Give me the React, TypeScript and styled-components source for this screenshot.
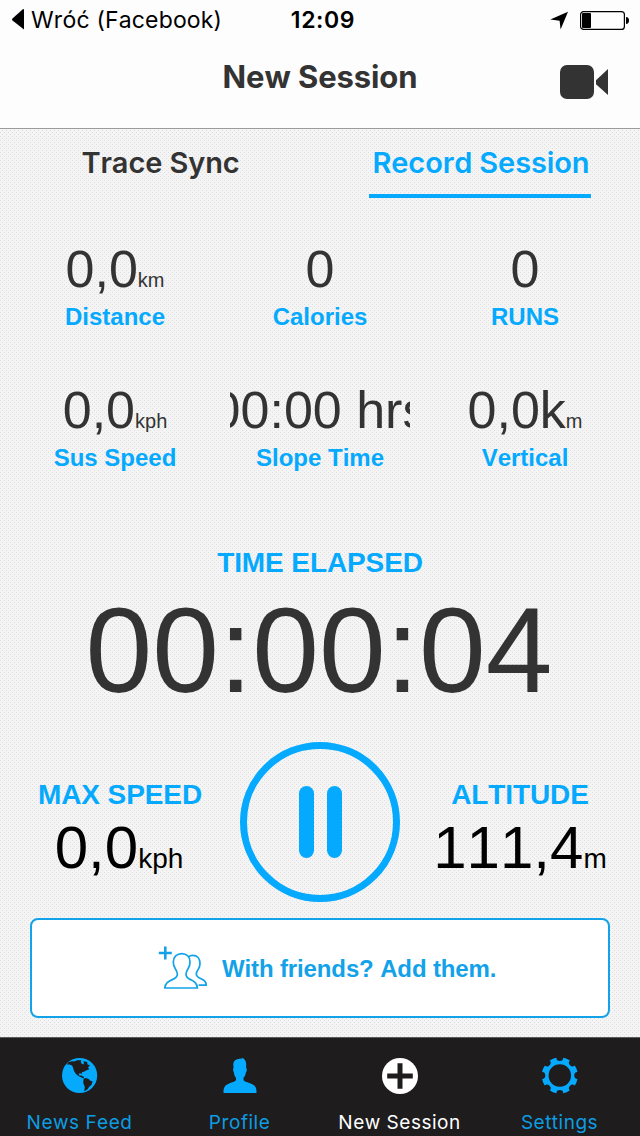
import React from "react";
import styled, { createGlobalStyle } from "styled-components";

const BLUE = "#05a9fd";
const INK = "#333333";
const SYSTEM = `Inter, "Liberation Sans", sans-serif`;
const HELV = `"Liberation Sans", Arial, sans-serif`;

const GlobalStyle = createGlobalStyle`
  * { box-sizing: border-box; }
  html, body { margin: 0; padding: 0; }
  body { width: 640px; height: 1136px; overflow: hidden; font-kerning: none; }
`;

const Screen = styled.div`
  width: 640px;
  height: 1136px;
  display: flex;
  flex-direction: column;
  overflow: hidden;
  font-family: ${HELV};
  color: ${INK};
  background-color: #f4f4f4;
  background-image: conic-gradient(at 1px 1px, transparent 75%, #dfdfdf 0),
    conic-gradient(at 1px 1px, transparent 75%, #dfdfdf 0);
  background-size: 4px 4px;
  background-position: 0 0, 2px 2px;
`;

const Header = styled.header`
  height: 129px;
  flex: none;
  background: #fdfdfd;
  border-bottom: 1px solid #9b9b9b;
  font-family: ${SYSTEM};
`;

const StatusBar = styled.div`
  height: 40px;
  display: grid;
  grid-template-columns: 1fr 80px 1fr;
  align-items: start;
  color: #000;
  padding: 0 11px 0 12px;
  font-size: 23px;
  line-height: 40px;
`;

const BackLink = styled.div`
  display: flex;
  gap: 6px;
  letter-spacing: 0.15px;
  white-space: nowrap;
  svg { margin-top: 8px; }
`;

const Clock = styled.div`
  padding-left: 5px;
  text-align: center;
  font-weight: 600;
  letter-spacing: 0.6px;
  line-height: 41px;
`;

const StatusIcons = styled.div`
  display: flex;
  justify-content: flex-end;
  gap: 12px;
  padding-top: 11px;
`;

const NavBar = styled.div`
  height: 88px;
  display: grid;
  grid-template-columns: 1fr 240px 1fr;
  padding: 0 31px;
`;

const Title = styled.h1`
  grid-column: 2;
  margin: 0;
  font-size: 31px;
  font-weight: 650;
  letter-spacing: -0.1px;
  line-height: 74px;
  text-align: center;
  white-space: nowrap;
`;

const CameraButton = styled.div`
  justify-self: end;
  padding-top: 25px;
`;

const Tabs = styled.nav`
  height: 69px;
  flex: none;
  display: flex;
  justify-content: space-between;
  padding: 0 49px 0 50px;
`;

const Tab = styled.div<{ $active?: boolean }>`
  width: ${(p) => (p.$active ? 222 : 221)}px;
  height: 69px;
  padding-left: ${(p) => (p.$active ? 2 : 0)}px;
  font-family: ${SYSTEM};
  font-size: 29px;
  font-weight: 600;
  letter-spacing: -0.1px;
  line-height: 67px;
  text-align: center;
  white-space: nowrap;
  color: ${(p) => (p.$active ? BLUE : INK)};
  border-bottom: 4px solid ${(p) => (p.$active ? BLUE : "transparent")};
`;

const Stats = styled.section`
  flex: none;
  display: grid;
  grid-template-columns: repeat(3, 180px);
  gap: 49px 25px;
  padding: 41px 25px 0;
`;

const StatValue = styled.div`
  display: flex;
  justify-content: center;
  align-items: baseline;
  overflow: hidden;
  height: 60px;
  font-size: 52px;
  line-height: 60px;
  white-space: pre;
`;

const Unit = styled.span<{ $size: number }>`
  font-size: ${(p) => p.$size}px;
`;

const StatLabel = styled.div`
  margin-top: 4px;
  font-size: 24px;
  font-weight: 700;
  line-height: 28px;
  text-align: center;
  color: ${BLUE};
`;

const Heading = styled.div`
  font-size: 28px;
  font-weight: 700;
  line-height: 34px;
  letter-spacing: -0.1px;
  text-align: center;
  color: ${BLUE};
`;

const Elapsed = styled.section`
  flex: none;
  padding-top: 74px;
`;

const Timer = styled.div`
  margin-top: 10px;
  padding-right: 2px;
  font-size: 120px;
  line-height: 120px;
  text-align: center;
`;

const Controls = styled.section`
  flex: none;
  display: grid;
  grid-template-columns: 240px 160px 240px;
  height: 160px;
  margin-top: 32px;
`;

const Reading = styled.div`
  padding-top: 36px;
`;

const ReadingValue = styled.div<{ $shift?: number }>`
  display: flex;
  justify-content: center;
  align-items: baseline;
  margin-top: 6px;
  padding-right: ${(p) => p.$shift ?? 0}px;
  font-size: 60px;
  line-height: 60px;
  color: #000;
`;

const PauseButton = styled.div`
  width: 160px;
  height: 160px;
  border: 7px solid ${BLUE};
  border-radius: 50%;
  display: flex;
  align-items: center;
  justify-content: center;
  gap: 13px;
`;

const PauseBar = styled.i`
  width: 15px;
  height: 72px;
  border-radius: 8px;
  background: ${BLUE};
`;

const FriendsButton = styled.div`
  flex: none;
  height: 100px;
  margin: 16px 30px 0;
  padding: 0 0 0 126px;
  display: flex;
  gap: 14px;
  background: #fff;
  border: 2px solid #13a2e8;
  border-radius: 8px;
  font-size: 24px;
  font-weight: 700;
  line-height: 98px;
  letter-spacing: -0.13px;
  color: #13a2e8;
  white-space: nowrap;
  svg { margin-top: 25px; }
`;

const TabBar = styled.nav`
  height: 99px;
  flex: none;
  margin-top: auto;
  display: grid;
  grid-template-columns: repeat(4, 160px);
  background: #1e1c1d;
  border-top: 1px solid #5c5c5c;
`;

const TabItem = styled.div<{ $active?: boolean }>`
  display: flex;
  flex-direction: column;
  align-items: center;
  padding: 19px 0 0;
  color: ${(p) => (p.$active ? "#fff" : BLUE)};
`;

const TabLabel = styled.span<{ $active?: boolean }>`
  margin: 15px 1px 0 0;
  font-family: ${SYSTEM};
  font-size: 19px;
  line-height: 28px;
  letter-spacing: 0.5px;
  white-space: nowrap;
  color: ${(p) => (p.$active ? "#fff" : "#0d9de2")};
`;

const Globe = () => (
  <svg width="36" height="37" viewBox="0 0 36 37">
    <circle cx="17.6" cy="18.5" r="17.6" fill="currentColor" />
    <path
      fill="#1e1c1d"
      d="M4.7 7.6 6.7 5 10 4.2 12 4.6 15.3 3.2 19.3 3.2 18.8 4.6 19.4 6.6 21.4 7.6 22 6 21.3 4.2 25.3 5 25.3 7.3 28 8.5 26 10.3 27.3 12.3 24 13.6 22.4 14.6 20 15.3 19.4 17.4 18.6 16.2 16.6 16.8 17.4 18.6 19.4 18.6 22 20 21.8 21.6 18.4 20 15.6 18.6 13.6 16.4 12 14 11 10.6 10 8.4 7.6 7.4Z"
    />
    <path fill="#1e1c1d" d="M21.6 21.8 24 20.9 27 22.2 28 23.4 30.6 24.5 29.4 28 27.2 29.8 25.4 32.6 22.2 34.2 22.8 29.8 21.2 26Z" />
  </svg>
);

const Person = () => (
  <svg width="36" height="37" viewBox="0 0 36 37">
    <path
      fill="currentColor"
      d="M12 4.5C13.5 2.2 17 2.1 19.7 1.6L21 1C22.7 2.5 24.2 4 24.2 7L24.1 11C25.1 11.3 25.1 14 23.9 15.5C23.6 17.8 22.8 19.5 21.5 20.8V23.3C23.5 25.5 30 25.9 33 29.2C34.6 31.2 34.6 34 34.4 36H1.6C1.4 34 1.4 31.2 3 29.2C6 25.9 12 25.5 14 23.3V20.8C12.6 19.5 12.2 17.8 11.9 15.5C10.8 14 10.8 11.3 11.6 11C11.2 8.5 11.1 6 12 4.5Z"
    />
  </svg>
);

const Plus = () => (
  <svg width="36" height="37" viewBox="0 0 36 37">
    <circle cx="18" cy="19" r="18" fill="currentColor" />
    <path d="M18 6.2v25.6M5.2 19h25.6" stroke="#1e1c1d" strokeWidth="5" fill="none" />
  </svg>
);

const Gear = () => (
  <svg width="36" height="37" viewBox="0 0 36 37">
    <mask id="gear">
      <circle cx="17.8" cy="18.5" r="18" fill="#fff" />
      <circle cx="17.8" cy="18.5" r="11.2" fill="#000" />
      {[0, 45, 90, 135, 180, 225, 270, 315].map((a) => (
        <ellipse key={a} cx="17.8" cy="0.8" rx="3.4" ry="3.2" fill="#000" transform={`rotate(${a} 17.8 18.5)`} />
      ))}
    </mask>
    <rect width="36" height="37" fill="currentColor" mask="url(#gear)" />
  </svg>
);

const AddFriends = () => (
  <svg width="50" height="46" viewBox="0 0 50 46" fill="none" stroke="#13a2e8" strokeWidth="1.7" strokeLinejoin="round">
    <path d="M7.3 1.5v13M0.8 8h13" strokeWidth="2.6" />
    <path d="M23.8 8.6C18.8 8.6 15.3 12 15.3 17C15.3 19.8 16 21.7 17.2 23.5C18.6 25.6 19.4 27 19.4 29.2C19.4 32 17.3 33.3 14.3 34.6C10.3 36.4 7.2 38 6.8 43H39.4C39 38 36.2 36.4 32.6 34.6C29.7 33.3 28 32 28 29.2C28 27 28.8 25.6 30.2 23.5C31.4 21.7 32 19.8 32 17C32 12 28.8 8.6 23.8 8.6Z" />
    <path d="M30.8 11.6C32 10.5 33.3 10.3 34.7 10.3C39.3 10.3 42 13.5 42 18.3C42 21 41.4 22.7 40.3 24.2C39 26 38.3 27.2 38.3 29C38.3 31.4 40.2 32.4 42.6 33.6C45.8 35.2 48.2 36.2 48.2 40.2H40.6" />
  </svg>
);

const stats = [
  { label: "Distance", value: "0,0", unit: "km" },
  { label: "Calories", value: "0" },
  { label: "RUNS", value: "0" },
  { label: "Sus Speed", value: "0,0", unit: "kph" },
  { label: "Slope Time", value: "00:00 hrs" },
  { label: "Vertical", value: "0,0k", unit: "m" },
];

const tabItems = [
  { label: "News Feed", Icon: Globe },
  { label: "Profile", Icon: Person },
  { label: "New Session", Icon: Plus, active: true },
  { label: "Settings", Icon: Gear },
];

export default function App() {
  return (
    <Screen>
      <GlobalStyle />
      <Header>
        <StatusBar>
          <BackLink>
            <svg width="13" height="22" viewBox="0 0 13 22">
              <path d="M12 1.5v20L0.5 12.5q-.8-1 0-2L10.5 1.5q1-.8 1.5 0z" fill="#000" />
            </svg>
            Wróć (Facebook)
          </BackLink>
          <Clock>12:09</Clock>
          <StatusIcons>
            <svg width="18" height="18" viewBox="0 0 18 18">
              <path d="M18 0.8 10.6 18.5 9.6 9.8 0.3 8.4Z" fill="#000" />
            </svg>
            <svg width="49" height="19" viewBox="0 0 49 19">
              <rect x="0.6" y="0.6" width="43.8" height="17.8" rx="3" fill="none" stroke="#000" strokeWidth="1.2" />
              <rect x="2" y="2" width="9" height="15" rx="1" fill="#000" />
              <path d="M46 6q3 .3 3 3.5T46 13z" fill="#000" />
            </svg>
          </StatusIcons>
        </StatusBar>
        <NavBar>
          <Title>New Session</Title>
          <CameraButton>
            <svg width="49" height="34" viewBox="0 0 49 34">
              <rect width="34" height="34" rx="7" fill={INK} />
              <path d="M36 15.2 48 4v26L36 19.2z" fill={INK} />
            </svg>
          </CameraButton>
        </NavBar>
      </Header>

      <Tabs>
        <Tab>Trace Sync</Tab>
        <Tab $active>Record Session</Tab>
      </Tabs>

      <Stats>
        {stats.map((s) => (
          <div key={s.label}>
            <StatValue>
              <span>{s.value}</span>
              {s.unit && <Unit $size={20}>{s.unit}</Unit>}
            </StatValue>
            <StatLabel>{s.label}</StatLabel>
          </div>
        ))}
      </Stats>

      <Elapsed>
        <Heading>TIME ELAPSED</Heading>
        <Timer>00:00:04</Timer>
      </Elapsed>

      <Controls>
        <Reading>
          <Heading>MAX SPEED</Heading>
          <ReadingValue $shift={2}>
            <span>0,0</span>
            <Unit $size={28}>kph</Unit>
          </ReadingValue>
        </Reading>
        <PauseButton>
          <PauseBar />
          <PauseBar />
        </PauseButton>
        <Reading>
          <Heading>ALTITUDE</Heading>
          <ReadingValue>
            <span>111,4</span>
            <Unit $size={28}>m</Unit>
          </ReadingValue>
        </Reading>
      </Controls>

      <FriendsButton>
        <AddFriends />
        With friends? Add them.
      </FriendsButton>

      <TabBar>
        {tabItems.map(({ label, Icon, active }) => (
          <TabItem key={label} $active={active}>
            <Icon />
            <TabLabel $active={active}>{label}</TabLabel>
          </TabItem>
        ))}
      </TabBar>
    </Screen>
  );
}
